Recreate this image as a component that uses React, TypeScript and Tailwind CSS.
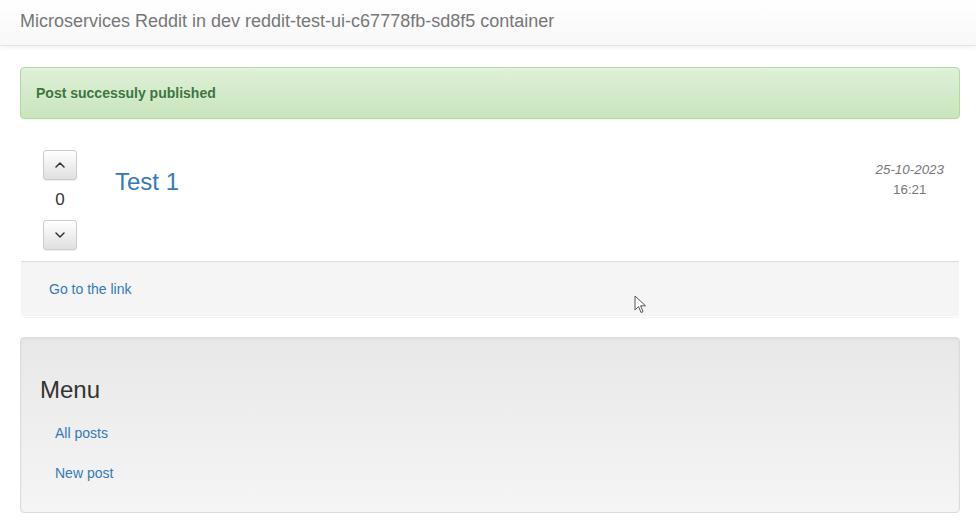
import React from 'react'

const font = { fontFamily: '"Liberation Sans", Arial, Helvetica, sans-serif' }

function Chevron({ up }: { up?: boolean }) {
  return (
    <svg width="10" height="6" viewBox="0 0 10 6" aria-hidden>
      <path
        d={up ? 'M1 5 L5 1 L9 5' : 'M1 1 L5 5 L9 1'}
        fill="none"
        stroke="#333"
        strokeWidth="1.5"
        strokeLinecap="round"
        strokeLinejoin="round"
      />
    </svg>
  )
}

function VoteButton({ up }: { up?: boolean }) {
  return (
    <button className="flex h-[30px] w-[34px] items-center justify-center rounded-[3px] border border-[#ccc] bg-gradient-to-b from-white to-[#e0e0e0] shadow-[inset_0_1px_0_rgba(255,255,255,0.15),0_1px_1px_rgba(0,0,0,0.075)]">
      <Chevron up={up} />
    </button>
  )
}

export default function App() {
  return (
    <div className="relative min-h-[525px] bg-white text-[14px] text-[#333]" style={font}>
      {/* navbar */}
      <nav className="flex h-[46px] items-start border-b border-[#e4e4e4] bg-gradient-to-b from-white to-[#f8f8f8] px-5 shadow-[0_1px_5px_rgba(0,0,0,0.075)]">
        <span className="mt-[10px] text-[18px] leading-[22px] text-[#777]">
          Microservices Reddit in dev reddit-test-ui-c67778fb-sd8f5 container
        </span>
      </nav>

      <main className="ml-5 w-[940px] pt-[21px]">
        {/* alert */}
        <div className="rounded border border-[#b2dba1] bg-gradient-to-b from-[#dff0d8] to-[#c8e5bc] px-[15px] py-[15px] leading-5 text-[#3c763d] shadow-[inset_0_1px_0_rgba(255,255,255,0.25),0_1px_2px_rgba(0,0,0,0.05)] [text-shadow:0_1px_0_rgba(255,255,255,0.2)]">
          <strong className="text-[14px] font-bold">Post successuly published</strong>
        </div>

        {/* post panel */}
        <div className="mt-5 rounded border border-transparent bg-white shadow-[0_1px_1px_rgba(0,0,0,0.05)]">
          <div className="flex pb-[11px] pl-[22px] pr-[15px] pt-[10px]">
            <div className="flex w-[34px] flex-col items-center">
              <VoteButton up />
              <div className="flex h-10 items-center justify-center text-[17px] text-[#333]">0</div>
              <VoteButton />
            </div>
            <a className="ml-[38px] mt-[19px] text-[24px] leading-[26px] text-[#337ab7]">Test 1</a>
            <div className="ml-auto mt-[10px] flex flex-col items-center text-[13.4px] leading-5 text-[#777]">
              <span className="italic">25-10-2023</span>
              <span>16:21</span>
            </div>
          </div>
          <div className="rounded-b-[3px] border-t border-[#ddd] bg-[#f5f5f5] px-[15px] py-[10px]">
            <a className="inline-block px-[13px] py-[7px] text-[14px] leading-5 text-[#337ab7]">Go to the link</a>
          </div>
        </div>

        {/* menu well */}
        <div className="mt-5 rounded border border-[#dcdcdc] bg-gradient-to-b from-[#e8e8e8] to-[#f5f5f5] p-[19px] shadow-[inset_0_1px_3px_rgba(0,0,0,0.05)]">
          <h3 className="mb-[10px] mt-5 text-[24px] leading-[26px] text-[#333]">Menu</h3>
          <ul className="flex flex-col">
            <li>
              <a className="block px-[15px] py-[10px] leading-5 text-[#337ab7]">All posts</a>
            </li>
            <li>
              <a className="block px-[15px] py-[10px] leading-5 text-[#337ab7]">New post</a>
            </li>
          </ul>
        </div>
      </main>

      {/* mouse pointer captured in the screenshot */}
      <svg className="absolute left-[634px] top-[295px]" width="13" height="20" viewBox="0 0 13 20" aria-hidden>
        <path d="M1 1 L1 15 L4.5 11.5 L7 17.5 L9 16.7 L6.6 10.8 L11.5 10.8 Z" fill="#fff" stroke="#555" strokeWidth="1" strokeLinejoin="round" />
      </svg>
    </div>
  )
}
